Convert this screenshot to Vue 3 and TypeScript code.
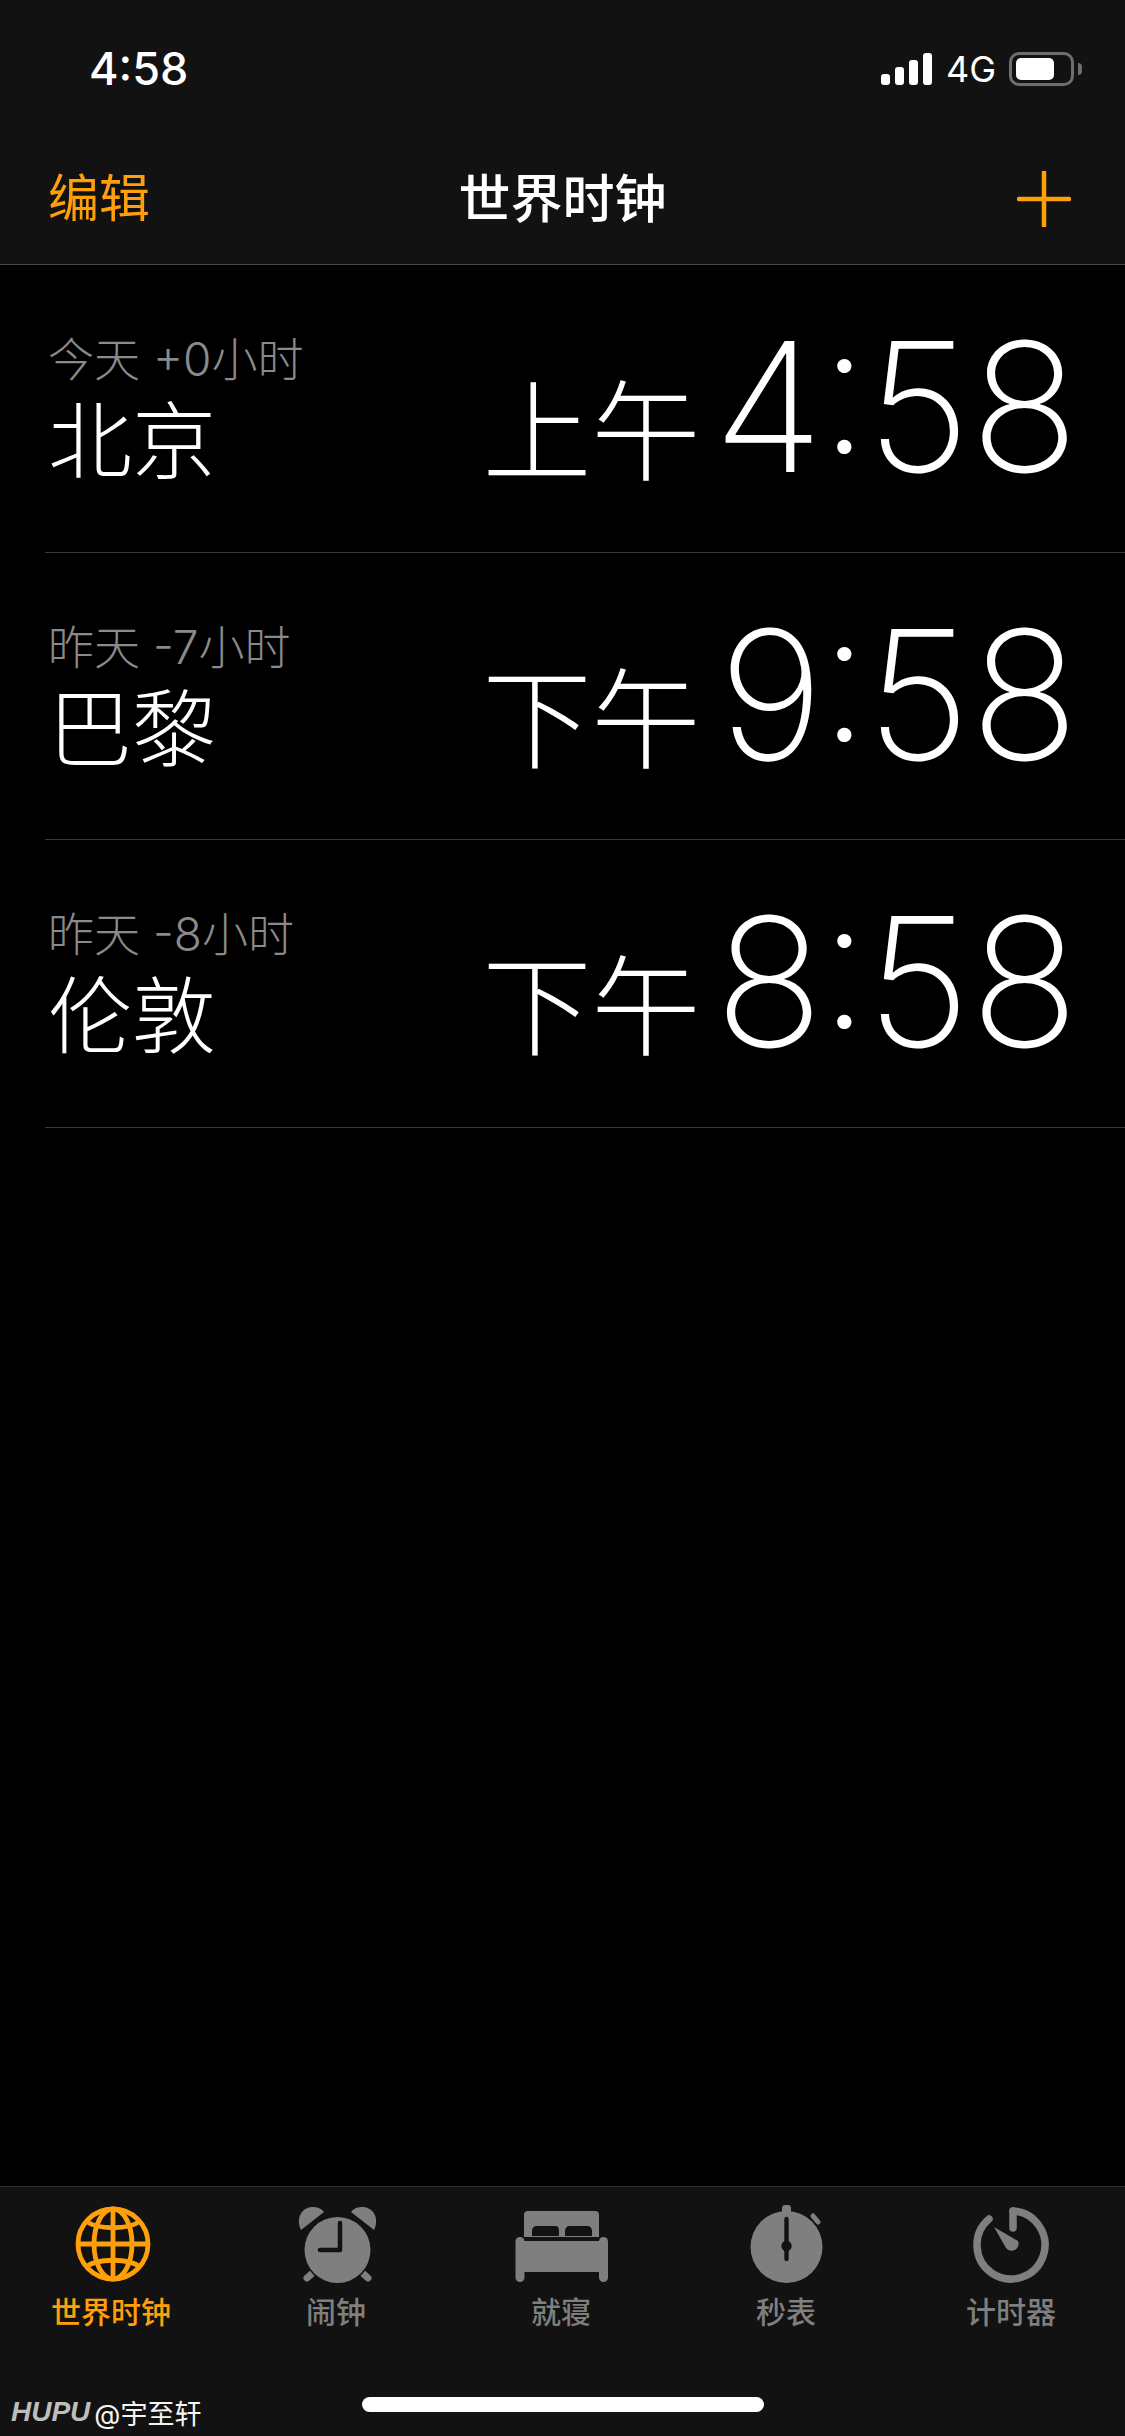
<script setup lang="ts">
interface City { sub: string; name: string; period: string; hour: string; minute: string }
const cities: City[] = [
  { sub: '今天 +0小时', name: '北京', period: '上午', hour: '4', minute: '58' },
  { sub: '昨天 -7小时', name: '巴黎', period: '下午', hour: '9', minute: '58' },
  { sub: '昨天 -8小时', name: '伦敦', period: '下午', hour: '8', minute: '58' },
]
</script>

<template>
  <div class="phone">
    <header class="top">
      <div class="status">
        <span class="clock">4:58</span>
        <div class="indicators">
          <div class="signal"><i class="b1"></i><i class="b2"></i><i class="b3"></i><i class="b4"></i></div>
          <span class="net">4G</span>
          <div class="battery"><div class="level"></div></div>
          <div class="nub"></div>
        </div>
      </div>
      <nav class="navbar">
        <span class="edit">编辑</span>
        <span class="title">世界时钟</span>
        <svg class="plus" width="54" height="56" viewBox="0 0 54 56"><path d="M27 1V55M2 28H52" stroke="#ff9f0a" stroke-width="4.5" stroke-linecap="round" fill="none"/></svg>
      </nav>
    </header>

    <main class="list">
      <div v-for="c in cities" :key="c.name" class="row">
        <div class="place">
          <div class="sub">{{ c.sub }}</div>
          <div class="name">{{ c.name }}</div>
        </div>
        <div class="when">
          <span class="period">{{ c.period }}</span>
          <span class="time"><span class="hour">{{ c.hour }}</span><span class="colon">:</span><span>{{ c.minute }}</span></span>
        </div>
      </div>
    </main>

    <footer class="tabbar">
      <div class="tabs">
        <div class="tab active">
          <svg width="96" height="80" viewBox="0 0 96 80" fill="none" stroke="#ff9f0a" stroke-width="4.8">
            <circle cx="48" cy="40" r="35"/>
            <ellipse cx="48" cy="40" rx="19" ry="35"/>
            <path d="M48 5V75M13 40H83"/>
            <path d="M21 17C32 26 64 26 75 17M21 63C32 54 64 54 75 63"/>
          </svg>
          <span>世界时钟</span>
        </div>
        <div class="tab">
          <svg width="96" height="80" viewBox="0 0 96 80">
            <path d="M11 26C6 16 10 4 22 3C27 3 31 4 34 8Z" fill="#7f7f7f"/>
            <path d="M84 26C89 16 85 4 73 3C68 3 64 4 61 8Z" fill="#7f7f7f"/>
            <path d="M17 74L28 64M78 74L67 64" stroke="#7f7f7f" stroke-width="7" stroke-linecap="round"/>
            <circle cx="47.5" cy="46" r="33" fill="#7f7f7f" stroke="#121212" stroke-width="3" paint-order="stroke"/>
            <path d="M50 19V46H30" stroke="#121212" stroke-width="4.5" stroke-linecap="round" stroke-linejoin="round" fill="none"/>
          </svg>
          <span>闹钟</span>
        </div>
        <div class="tab">
          <svg width="96" height="80" viewBox="0 0 96 80">
            <rect x="9" y="7" width="75" height="30" rx="4" fill="#7f7f7f"/>
            <path d="M17 32V27C17 24 19 22 22 22H40C43 22 44 24 44 27V32ZM50 32V27C50 24 52 22 54 22H72C75 22 77 24 77 27V32Z" fill="#121212"/>
            <rect x="0" y="33" width="93" height="4" fill="#121212"/>
            <rect x="4" y="37" width="85" height="31" fill="#7f7f7f"/>
            <rect x="0.5" y="33" width="9" height="45" rx="4.5" fill="#7f7f7f"/>
            <rect x="84" y="33" width="9" height="45" rx="4.5" fill="#7f7f7f"/>
          </svg>
          <span>就寝</span>
        </div>
        <div class="tab">
          <svg width="96" height="80" viewBox="0 0 96 80">
            <ellipse cx="46.5" cy="43" rx="36" ry="36" fill="#7f7f7f"/>
            <rect x="42" y="1" width="9" height="12" rx="3" fill="#7f7f7f"/>
            <path d="M73 12L78 18" stroke="#7f7f7f" stroke-width="5" stroke-linecap="round"/>
            <path d="M46.5 15V55" stroke="#121212" stroke-width="4.4" stroke-linecap="round"/>
            <circle cx="46.5" cy="42" r="5.2" fill="#121212"/>
          </svg>
          <span>秒表</span>
        </div>
        <div class="tab">
          <svg width="96" height="80" viewBox="0 0 96 80" fill="none">
            <path d="M48 7A34 34 0 1 1 24 15" stroke="#7f7f7f" stroke-width="7.5" stroke-linecap="round"/>
            <path d="M48 7V24" stroke="#7f7f7f" stroke-width="7.5" stroke-linecap="round"/>
            <path d="M29 23L41 44A7 7 0 0 0 53 37Z" fill="#7f7f7f"/>
          </svg>
          <span>计时器</span>
        </div>
      </div>
      <div class="home"></div>
      <div class="mark"><b>HUPU</b><span>@宇至轩</span></div>
    </footer>
  </div>
</template>

<style>
html, body { margin: 0; background: #000; }
</style>

<style scoped>
.phone {
  width: 1125px;
  height: 2436px;
  background: #000;
  display: flex;
  flex-direction: column;
  font-family: Inter, "Noto Sans CJK SC", sans-serif;
  color: #fff;
  overflow: hidden;
}
.top {
  height: 264px;
  background: #121212;
  border-bottom: 1px solid #48484a;
  flex: none;
}
.status {
  height: 132px;
  display: flex;
  justify-content: space-between;
  align-items: flex-start;
  padding: 0 43px 0 89px;
  box-sizing: border-box;
}
.clock {
  font-size: 45px;
  font-weight: 500;
  line-height: 46px;
  margin-top: 46px;
}
.indicators {
  display: flex;
  align-items: flex-start;
  margin-top: 52px;
}
.signal {
  display: flex;
  align-items: flex-end;
  gap: 5px;
  height: 33px;
  margin-right: 14px;
}
.signal i { width: 9px; background: #fff; border-radius: 3px; display: block; }
.b1 { height: 11px; }
.b2 { height: 18px; }
.b3 { height: 25px; }
.b4 { height: 32px; }
.net {
  font-size: 36px;
  line-height: 36px;
  margin-top: -1px;
  margin-right: 13px;
  font-weight: 400;
}
.battery {
  width: 65px;
  height: 34px;
  box-sizing: border-box;
  border: 3px solid #6e6e6e;
  border-radius: 10px;
  padding: 3px 4px;
}
.level { width: 38px; height: 22px; background: #fff; border-radius: 5px; }
.nub {
  width: 4px;
  height: 12px;
  margin: 11px 0 0 4px;
  background: #6e6e6e;
  border-radius: 0 4px 4px 0;
}
.navbar {
  height: 132px;
  display: flex;
  align-items: center;
  justify-content: space-between;
  padding: 0 54px 0 48px;
  position: relative;
  box-sizing: border-box;
}
.edit { font-size: 51px; color: #ff9f0a; line-height: 56px; margin-top: 2px; }
.title {
  position: absolute;
  left: 0;
  right: 0;
  text-align: center;
  font-size: 52px;
  font-weight: 500;
  line-height: 56px;
  top: 40px;
}
.plus { margin-top: 2px; }
.list { flex: 1; padding-left: 45px; }
.row {
  height: 287.5px;
  box-sizing: border-box;
  border-bottom: 1px solid #3a3a3c;
  display: flex;
  justify-content: space-between;
  padding-right: 46px;
}
.place { padding: 59px 0 0 3px; }
.sub { font-size: 46px; line-height: 70px; color: #8a8a8a; font-weight: 300; }
.name { font-size: 84px; line-height: 96px; font-weight: 300; }
.when { display: flex; align-items: flex-start; }
.period { font-size: 109px; font-weight: 200; margin: 92px 5px 0 0; line-height: 150px; }
.time { font-size: 180px; font-weight: 200; line-height: 210px; margin-top: 37px; display: flex; }
.hour { width: 118px; text-align: right; margin-right: -4px; flex: none; }
.colon { margin-right: -3px; font-feature-settings: "case" 1; }
.tabbar {
  height: 250px;
  flex: none;
  background: #121212;
  border-top: 1px solid #2c2c2e;
  box-sizing: border-box;
  position: relative;
}
.tabs { display: grid; grid-template-columns: repeat(5, 225px); padding-top: 17px; }
.tab {
  display: flex;
  flex-direction: column;
  align-items: center;
  color: #7f7f7f;
  font-size: 30px;
  font-weight: 500;
  line-height: 36px;
}
.tab svg { margin-bottom: 10px; }
.tab span { margin-right: 3px; }
.tab.active { color: #ff9f0a; }
.home {
  position: absolute;
  left: 362px;
  top: 210px;
  width: 402px;
  height: 15px;
  border-radius: 8px;
  background: #fff;
}
.mark {
  position: absolute;
  left: 11px;
  top: 207px;
  display: flex;
  align-items: center;
  gap: 4px;
  height: 36px;
}
.mark b {
  font-family: "Liberation Sans", sans-serif;
  font-size: 28px;
  font-style: italic;
  font-weight: 700;
  color: #bdbdbd;
}
.mark span { font-size: 27px; color: #f4f4f4; }
</style>
